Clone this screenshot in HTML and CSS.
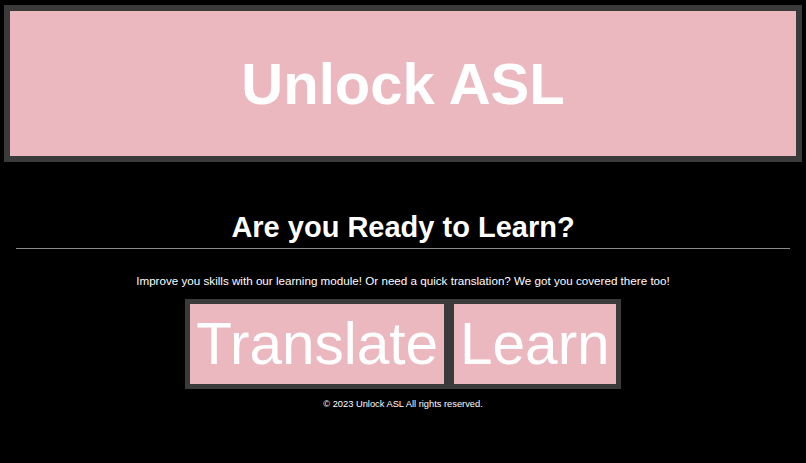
FILE: index.html
```html
<!DOCTYPE html>
<html lang="en">
<head>
<meta charset="utf-8">
<title>Unlock ASL</title>
<link rel="stylesheet" href="styles.css">
</head>
<body>
<header class="banner">
  <h1 class="banner-title">Unlock ASL</h1>
</header>
<main class="intro">
  <h2 class="intro-heading">Are you Ready to Learn?</h2>
  <hr class="intro-rule">
  <p class="intro-text">Improve you skills with our learning module! Or need a quick translation? We got you covered there too!</p>
  <div class="actions">
    <a class="action-btn" href="#translate">Translate</a>
    <a class="action-btn" href="#learn">Learn</a>
  </div>
</main>
<footer class="site-footer">© 2023 Unlock ASL All rights reserved.</footer>
</body>
</html>
```
FILE: styles.css
```css
html, body {
  margin: 0;
  padding: 0;
  background: #000;
}
body {
  color: #fff;
  font-family: "Liberation Sans", Arial, sans-serif;
}
.banner {
  margin: 5px 4px 0;
  border: 6px solid #3a3a3a;
  background: #ebb8c0;
  height: 145px;
  display: flex;
  align-items: center;
  justify-content: center;
}
.banner-title {
  margin: 0;
  font-size: 58px;
  font-weight: bold;
  line-height: 1;
  color: #fff;
}
.intro {
  display: flex;
  flex-direction: column;
  align-items: center;
}
.intro-heading {
  margin: 49px 0 0;
  font-size: 29px;
  font-weight: bold;
  line-height: 33px;
}
.intro-rule {
  align-self: stretch;
  margin: 4px 16px 0;
  border: 0;
  border-top: 1px solid #8a8a8a;
  height: 0;
}
.intro-text {
  margin: 25px 0 0;
  font-size: 11.65px;
  line-height: 13px;
}
.actions {
  margin-top: 12px;
  display: flex;
}
.action-btn {
  display: block;
  border: 5px solid #3a3a3a;
  background: #ebb8c0;
  color: #fff;
  text-decoration: none;
  font-size: 58.5px;
  line-height: 80px;
  padding: 0 6px;
}
.site-footer {
  margin-top: 10px;
  text-align: center;
  font-size: 9.3px;
  line-height: 11px;
}
```
